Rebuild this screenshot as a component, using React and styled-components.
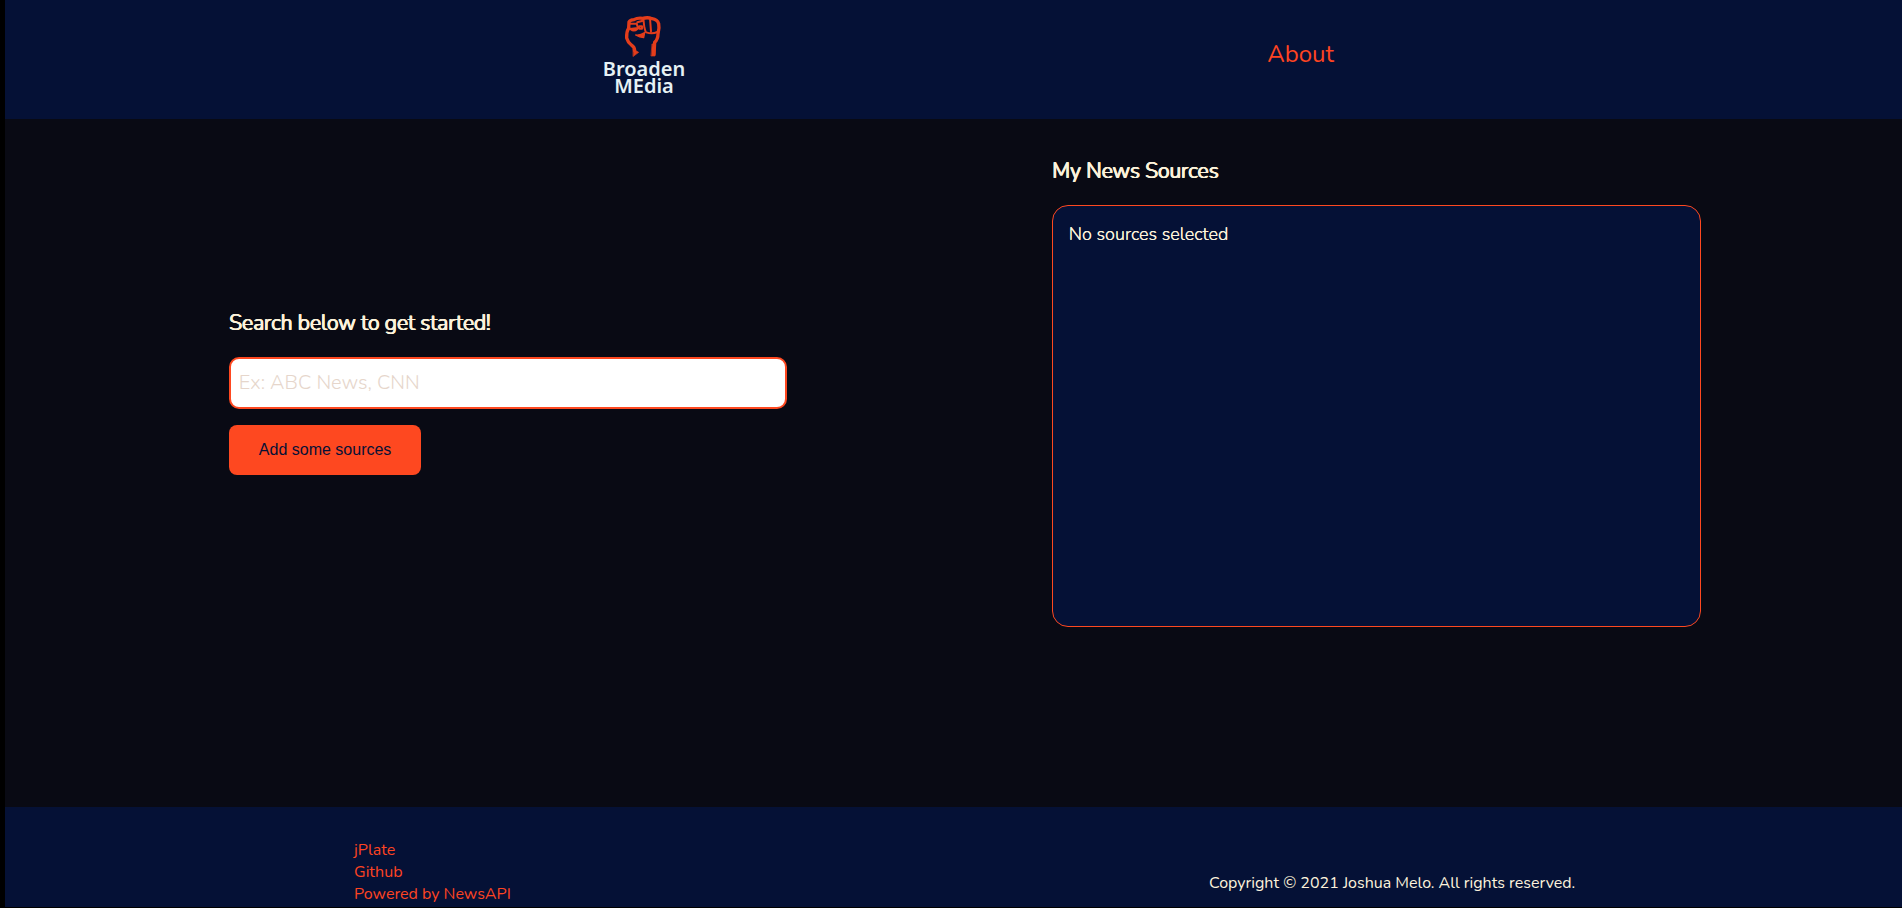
import React from "react";
import styled, { createGlobalStyle } from "styled-components";

const GlobalStyle = createGlobalStyle`
  *, *::before, *::after { box-sizing: border-box; }
  html { background: #000; }
  body {
    margin: 0;
    font-family: "Nunito", "Lato", "Open Sans", sans-serif;
    color: #fdf3dc;
  }
`;

const Page = styled.div`
  min-height: 100vh;
  display: flex;
  flex-direction: column;
  border-left: 5px solid #000;
  border-bottom: 1px solid #000;
  background: #090a14;
`;

const Header = styled.header`
  display: flex;
  justify-content: space-evenly;
  align-items: center;
  padding: 12px 0 19px;
  background: #051136;
`;

const LogoLink = styled.a`
  display: block;
  width: 126px;
  height: 88px;
`;

const LogoArt = styled.svg`
  display: block;
  width: 100%;
  height: 100%;
  font-family: "Noto Sans", sans-serif;
  font-size: 20px;
  font-weight: 600;
  fill: #e6f1f5;
`;

const NavLink = styled.a`
  margin-bottom: 4px;
  font-size: 24px;
  line-height: 32px;
  color: #fe4422;
  text-decoration: none;
`;

const Main = styled.main`
  flex: 1;
  display: grid;
  grid-template-columns: 558fr 649fr;
  column-gap: 18%;
  padding: 36px 10.6% 0 11.8%;
`;

const Search = styled.form`
  display: flex;
  flex-direction: column;
  align-items: flex-start;
  padding-top: 152px;
`;

const Sources = styled.section`
  display: flex;
  flex-direction: column;
`;

const Title = styled.h2`
  margin: 0 0 18px;
  font-size: 21px;
  line-height: 32px;
  font-weight: 300;
  text-shadow: 0 0 currentColor, 1px 0 currentColor, 1px 0 currentColor;
`;

const SearchLabel = styled.label`
  display: block;
`;

const SearchInput = styled.input`
  width: 100%;
  height: 52px;
  margin-bottom: 16px;
  padding: 0 8px 2px;
  border: 2px solid #fe4820;
  border-radius: 10px;
  background: #fff;
  font-family: inherit;
  font-size: 20px;
  font-weight: 300;
  color: #051136;
  &::placeholder { color: #e6d6cb; opacity: 1; }
`;

const AddButton = styled.button`
  height: 50px;
  padding: 0 30px;
  border: 0;
  border-radius: 8px;
  background: #fe4820;
  font-family: "Liberation Sans", sans-serif;
  font-size: 16px;
  color: #051136;
`;

const SourceBox = styled.div`
  min-height: 422px;
  padding: 16px;
  border: 1px solid #fe4820;
  border-radius: 16px;
  background: #051136;
  font-size: 18px;
  font-weight: 300;
  line-height: 24px;
  text-shadow: 0 0 currentColor;
`;

const Footer = styled.footer`
  display: grid;
  grid-template-columns: 855fr 693fr;
  align-items: center;
  padding: 32px 0 2px 18.4%;
  background: #051136;
  font-size: 16px;
  line-height: 22px;
`;

const FooterLinks = styled.nav`
  display: flex;
  flex-direction: column;
  align-items: flex-start;
`;

const FooterLink = styled.a`
  color: #fe4422;
  text-decoration: none;
`;

const Copyright = styled.p`
  margin: 0;
  padding-top: 22px;
`;

function Logo() {
  return (
    <LogoArt viewBox="0 0 126 88" role="img" aria-label="Broaden MEdia">
      <g transform="translate(47 0) scale(0.3333)" fill="none" stroke="#e43d1b" strokeWidth="10" strokeLinejoin="round" strokeLinecap="round">
        <path d="M26 48 L27 30 Q30 24 42 23 Q52 17 68 19 Q84 15 96 20 Q112 22 116 35 Q119 48 114 66 Q114 82 104 91 L102 127" />
        <path d="M26 48 Q19 60 20 78 Q24 92 34 99 Q44 105 44 116" />
        <path d="M40 112 L56 121 L40 133 Z" fill="#e43d1b" strokeWidth="2" />
        <path d="M97 96 H106 L105 132 H94 Z" fill="#e43d1b" strokeWidth="2" />
        <path d="M30 35 H50 L54 48 L30 51 M52 31 L66 27 M58 43 H66 V50 H58 Z M70 20 L73 46 L77 60 M90 19 L93 58 M79 61 Q96 67 112 60 M32 52 Q42 60 52 51" strokeWidth="6" />
        <path d="M47 69 Q60 71 74 62 L71 77 Q59 76 47 69 Z" fill="#e43d1b" strokeWidth="4" />
      </g>
      <text x="71" y="64" textAnchor="middle">Broaden</text>
      <text x="71" y="81" textAnchor="middle">MEdia</text>
    </LogoArt>
  );
}

export default function App() {
  return (
    <>
      <GlobalStyle />
      <Page>
        <Header>
          <LogoLink href="#home"><Logo /></LogoLink>
          <NavLink href="#about">About</NavLink>
        </Header>
        <Main>
          <Search onSubmit={(event) => event.preventDefault()}>
            <Title><SearchLabel htmlFor="source-search">Search below to get started!</SearchLabel></Title>
            <SearchInput id="source-search" type="text" placeholder="Ex: ABC News, CNN" />
            <AddButton type="submit">Add some sources</AddButton>
          </Search>
          <Sources>
            <Title>My News Sources</Title>
            <SourceBox>No sources selected</SourceBox>
          </Sources>
        </Main>
        <Footer>
          <FooterLinks>
            <FooterLink href="#jplate">jPlate</FooterLink>
            <FooterLink href="#github">Github</FooterLink>
            <FooterLink href="#newsapi">Powered by NewsAPI</FooterLink>
          </FooterLinks>
          <Copyright>Copyright © 2021 Joshua Melo. All rights reserved.</Copyright>
        </Footer>
      </Page>
    </>
  );
}
